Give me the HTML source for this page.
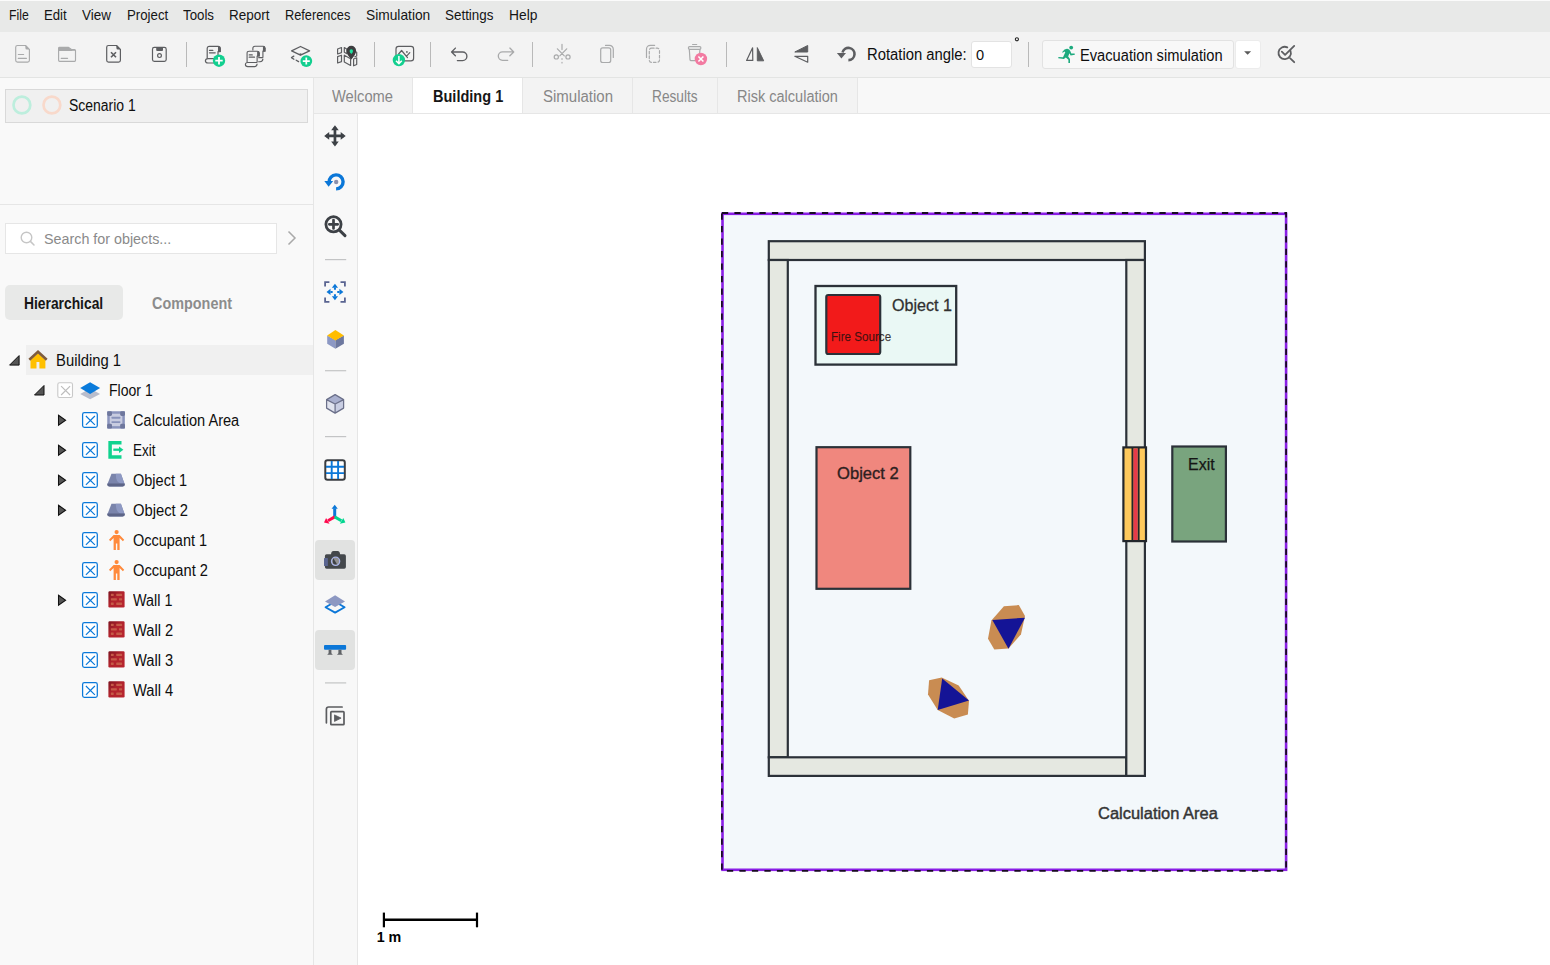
<!DOCTYPE html>
<html><head><meta charset="utf-8"><title>Evacuation</title>
<style>
*{margin:0;padding:0;box-sizing:border-box}
html,body{width:1550px;height:965px;overflow:hidden}
body{position:relative;font-family:"Liberation Sans",sans-serif;background:#ffffff;color:#1b1b1b}
.a{position:absolute}
.t{position:absolute;white-space:nowrap;line-height:1}
</style></head><body>

<div class="a" style="left:0px;top:0px;width:1550px;height:1px;background:#fbfbfb"></div>
<div class="a" style="left:0px;top:1px;width:1550px;height:31px;background:#e8e9e8"></div>
<div class="a" style="left:0px;top:32px;width:1550px;height:45px;background:#f3f3f3"></div>
<div class="a" style="left:0px;top:77px;width:1550px;height:1px;background:#e3e4e3"></div>
<div class="a" style="left:0px;top:78px;width:313px;height:887px;background:#f9f9f9"></div>
<div class="a" style="left:313px;top:78px;width:1px;height:887px;background:#e6e6e6"></div>
<div class="a" style="left:314px;top:78px;width:1236px;height:35px;background:#f8f8f8"></div>
<div class="a" style="left:314px;top:113px;width:1236px;height:1px;background:#e6e6e6"></div>
<div class="a" style="left:314px;top:114px;width:43px;height:851px;background:#f8f8f8"></div>
<div class="a" style="left:357px;top:114px;width:1px;height:851px;background:#e6e6e6"></div>
<div class="t" style="left:8.70px;top:7.67px;font-size:14.8px;color:#151515;font-weight:400;transform:scaleX(0.8268);transform-origin:0 0;">File</div>
<div class="t" style="left:44.40px;top:7.67px;font-size:14.8px;color:#151515;font-weight:400;transform:scaleX(0.8892);transform-origin:0 0;">Edit</div>
<div class="t" style="left:82.00px;top:7.67px;font-size:14.8px;color:#151515;font-weight:400;transform:scaleX(0.9114);transform-origin:0 0;">View</div>
<div class="t" style="left:126.50px;top:7.67px;font-size:14.8px;color:#151515;font-weight:400;transform:scaleX(0.8951);transform-origin:0 0;">Project</div>
<div class="t" style="left:183.20px;top:7.67px;font-size:14.8px;color:#151515;font-weight:400;transform:scaleX(0.8970);transform-origin:0 0;">Tools</div>
<div class="t" style="left:229.20px;top:7.67px;font-size:14.8px;color:#151515;font-weight:400;transform:scaleX(0.9122);transform-origin:0 0;">Report</div>
<div class="t" style="left:285.20px;top:7.67px;font-size:14.8px;color:#151515;font-weight:400;transform:scaleX(0.8626);transform-origin:0 0;">References</div>
<div class="t" style="left:366.00px;top:7.67px;font-size:14.8px;color:#151515;font-weight:400;transform:scaleX(0.9303);transform-origin:0 0;">Simulation</div>
<div class="t" style="left:445.00px;top:7.67px;font-size:14.8px;color:#151515;font-weight:400;transform:scaleX(0.9065);transform-origin:0 0;">Settings</div>
<div class="t" style="left:509.00px;top:7.67px;font-size:14.8px;color:#151515;font-weight:400;transform:scaleX(0.9338);transform-origin:0 0;">Help</div>
<div class="a" style="left:314px;top:78px;width:98px;height:35px;background:#f3f3f3"></div>
<div class="a" style="left:412px;top:78px;width:1px;height:35px;background:#e6e6e6"></div>
<div class="a" style="left:413px;top:78px;width:109px;height:35px;background:#ffffff"></div>
<div class="a" style="left:522px;top:78px;width:1px;height:35px;background:#e6e6e6"></div>
<div class="a" style="left:523px;top:78px;width:109px;height:35px;background:#f3f3f3"></div>
<div class="a" style="left:632px;top:78px;width:1px;height:35px;background:#e6e6e6"></div>
<div class="a" style="left:633px;top:78px;width:84px;height:35px;background:#f3f3f3"></div>
<div class="a" style="left:717px;top:78px;width:1px;height:35px;background:#e6e6e6"></div>
<div class="a" style="left:718px;top:78px;width:139px;height:35px;background:#f3f3f3"></div>
<div class="a" style="left:857px;top:78px;width:1px;height:35px;background:#e6e6e6"></div>
<div class="t" style="left:331.90px;top:89.29px;font-size:15.6px;color:#878787;font-weight:400;transform:scaleX(0.9422);transform-origin:0 0;">Welcome</div>
<div class="t" style="left:432.70px;top:89.29px;font-size:15.6px;color:#161616;font-weight:700;transform:scaleX(0.9320);transform-origin:0 0;">Building 1</div>
<div class="t" style="left:543.10px;top:89.29px;font-size:15.6px;color:#878787;font-weight:400;transform:scaleX(0.9622);transform-origin:0 0;">Simulation</div>
<div class="t" style="left:652.30px;top:89.29px;font-size:15.6px;color:#878787;font-weight:400;transform:scaleX(0.8784);transform-origin:0 0;">Results</div>
<div class="t" style="left:737.20px;top:89.29px;font-size:15.6px;color:#878787;font-weight:400;transform:scaleX(0.9313);transform-origin:0 0;">Risk calculation</div>
<div class="a" style="left:5px;top:89px;width:303px;height:34px;background:#f0f0f0;border:1px solid #d9d9d9"></div>
<svg class="a" style="left:12px;top:95px" width="20" height="20" viewBox="0 0 20 20"><circle cx="9.9" cy="10" r="8.4" fill="none" stroke="#bdeedd" stroke-width="2.7"/></svg>
<svg class="a" style="left:42px;top:95px" width="20" height="20" viewBox="0 0 20 20"><circle cx="9.9" cy="10" r="8.4" fill="none" stroke="#f8d9cb" stroke-width="2.7"/></svg>
<div class="t" style="left:69.20px;top:98.19px;font-size:15.6px;color:#0e0e0e;font-weight:400;transform:scaleX(0.8958);transform-origin:0 0;">Scenario 1</div>
<div class="a" style="left:0px;top:204px;width:313px;height:1px;background:#e6e6e6"></div>
<div class="a" style="left:5px;top:223px;width:272px;height:31px;background:#ffffff;border:1px solid #e6e6e6"></div>
<svg class="a" style="left:19px;top:230px" width="18" height="18" viewBox="0 0 18 18"><circle cx="7.5" cy="7.5" r="5.3" fill="none" stroke="#c6c6c6" stroke-width="1.4"/><line x1="11.4" y1="11.4" x2="15" y2="15" stroke="#c6c6c6" stroke-width="1.5" stroke-linecap="round"/></svg>
<div class="t" style="left:44.40px;top:232.28px;font-size:14.2px;color:#8a8a8a;font-weight:400;transform:scaleX(1.0086);transform-origin:0 0;">Search for objects...</div>
<svg class="a" style="left:285px;top:229px" width="14" height="18" viewBox="0 0 14 18"><path d="M3.5 2.5 L10 9 L3.5 15.5" fill="none" stroke="#a9a9a9" stroke-width="1.5"/></svg>
<div class="a" style="left:5px;top:285px;width:118px;height:35px;background:#e8e9e8;border-radius:5px"></div>
<div class="t" style="left:24.40px;top:295.53px;font-size:15.8px;color:#161616;font-weight:700;transform:scaleX(0.8756);transform-origin:0 0;">Hierarchical</div>
<div class="t" style="left:152.10px;top:295.53px;font-size:15.8px;color:#8c8c8c;font-weight:700;transform:scaleX(0.9115);transform-origin:0 0;">Component</div>
<div class="a" style="left:26px;top:345px;width:287px;height:30px;background:#f0f0f0"></div>
<div class="t" style="left:55.60px;top:353.39px;font-size:15.6px;color:#0e0e0e;font-weight:400;transform:scaleX(0.9506);transform-origin:0 0;">Building 1</div>
<div class="t" style="left:108.60px;top:383.39px;font-size:15.6px;color:#0e0e0e;font-weight:400;transform:scaleX(0.9007);transform-origin:0 0;">Floor 1</div>
<div class="t" style="left:133.40px;top:413.39px;font-size:15.6px;color:#0e0e0e;font-weight:400;transform:scaleX(0.9354);transform-origin:0 0;">Calculation Area</div>
<div class="t" style="left:133.40px;top:443.39px;font-size:15.6px;color:#0e0e0e;font-weight:400;transform:scaleX(0.8624);transform-origin:0 0;">Exit</div>
<div class="t" style="left:133.40px;top:473.39px;font-size:15.6px;color:#0e0e0e;font-weight:400;transform:scaleX(0.9310);transform-origin:0 0;">Object 1</div>
<div class="t" style="left:133.40px;top:503.39px;font-size:15.6px;color:#0e0e0e;font-weight:400;transform:scaleX(0.9465);transform-origin:0 0;">Object 2</div>
<div class="t" style="left:133.40px;top:533.39px;font-size:15.6px;color:#0e0e0e;font-weight:400;transform:scaleX(0.9286);transform-origin:0 0;">Occupant 1</div>
<div class="t" style="left:133.40px;top:563.39px;font-size:15.6px;color:#0e0e0e;font-weight:400;transform:scaleX(0.9399);transform-origin:0 0;">Occupant 2</div>
<div class="t" style="left:133.30px;top:593.39px;font-size:15.6px;color:#0e0e0e;font-weight:400;transform:scaleX(0.9218);transform-origin:0 0;">Wall 1</div>
<div class="t" style="left:133.30px;top:623.39px;font-size:15.6px;color:#0e0e0e;font-weight:400;transform:scaleX(0.9405);transform-origin:0 0;">Wall 2</div>
<div class="t" style="left:133.30px;top:653.39px;font-size:15.6px;color:#0e0e0e;font-weight:400;transform:scaleX(0.9405);transform-origin:0 0;">Wall 3</div>
<div class="t" style="left:133.30px;top:683.39px;font-size:15.6px;color:#0e0e0e;font-weight:400;transform:scaleX(0.9405);transform-origin:0 0;">Wall 4</div>
<div class="t" style="left:867.00px;top:46.83px;font-size:15.8px;color:#0e0e0e;font-weight:400;transform:scaleX(0.9383);transform-origin:0 0;">Rotation angle:</div>
<div class="a" style="left:971px;top:41px;width:41px;height:27px;background:#ffffff;border:1px solid #e3e3e3;border-radius:3px"></div>
<div class="t" style="left:976.00px;top:48.14px;font-size:14.6px;color:#111111;font-weight:400;">0</div>
<svg class="a" style="left:1012px;top:35px" width="10" height="10" viewBox="0 0 10 10"><circle cx="4.9" cy="4.2" r="1.55" fill="none" stroke="#222" stroke-width="1.05"/></svg>
<div class="a" style="left:1042px;top:40px;width:192px;height:29px;background:#f8f8f8;border:1px solid #e2e2e2;border-radius:3px"></div>
<div class="a" style="left:1235px;top:40px;width:26px;height:29px;background:#ffffff;border:1px solid #ececec;border-radius:3px"></div>
<svg class="a" style="left:1242px;top:49px" width="12" height="8" viewBox="0 0 12 8"><path d="M2.1 2.3 H9.1 L5.6 5.8 Z" fill="#5a5a5a"/></svg>
<div class="t" style="left:1079.70px;top:48.29px;font-size:15.6px;color:#0e0e0e;font-weight:400;transform:scaleX(0.9401);transform-origin:0 0;">Evacuation simulation</div>
<div class="a" style="left:186px;top:42px;width:1px;height:25px;background:#b9b9b9"></div>
<div class="a" style="left:374px;top:42px;width:1px;height:25px;background:#b9b9b9"></div>
<div class="a" style="left:430px;top:42px;width:1px;height:25px;background:#b9b9b9"></div>
<div class="a" style="left:532px;top:42px;width:1px;height:25px;background:#b9b9b9"></div>
<div class="a" style="left:726px;top:42px;width:1px;height:25px;background:#b9b9b9"></div>
<div class="a" style="left:1028px;top:42px;width:1px;height:25px;background:#b9b9b9"></div>
<svg class="a" style="left:0;top:0" width="1550" height="965" viewBox="0 0 1550 965"><rect x="722.5" y="213.8" width="563.6" height="656.0" fill="#f3f8fb" stroke="#8a1fe6" stroke-width="2.6"/><rect x="721.9" y="213.0" width="564.2" height="657.9" fill="none" stroke="#180a22" stroke-width="1.8" stroke-dasharray="6.3 6.2"/><rect x="768.8" y="241.2" width="376.10" height="18.80" fill="#e5e8e1" stroke="#2b3138" stroke-width="2.2" /><rect x="768.8" y="260" width="19.00" height="497.30" fill="#e5e8e1" stroke="#2b3138" stroke-width="2.2" /><rect x="768.8" y="757.3" width="357.50" height="18.60" fill="#e5e8e1" stroke="#2b3138" stroke-width="2.2" /><rect x="1126.3" y="260" width="18.60" height="515.90" fill="#e5e8e1" stroke="#2b3138" stroke-width="2.2" /><rect x="815.5" y="286" width="140.70" height="78.60" fill="#eaf8f5" stroke="#2b3138" stroke-width="2.3" /><rect x="826.3" y="295" width="53.90" height="59.00" fill="#f21a1a" stroke="#2b3138" stroke-width="2.2" rx="2"/><rect x="816.5" y="447.2" width="93.80" height="141.60" fill="#f0877e" stroke="#2b3138" stroke-width="2.2" /><rect x="1172.3" y="446.5" width="53.60" height="95.00" fill="#79a47e" stroke="#2b3138" stroke-width="2.2" /><rect x="1123.4" y="447.4" width="22.60" height="93.70" fill="#fec95c" stroke="#22262b" stroke-width="2.2" /><rect x="1133.3" y="448.5" width="4.4" height="91.5" fill="#e8394a"/><line x1="1132.4" y1="448" x2="1132.4" y2="540.5" stroke="#22262b" stroke-width="1.8"/><line x1="1138.7" y1="448" x2="1138.7" y2="540.5" stroke="#22262b" stroke-width="1.8"/><polygon points="1003.9,606.3 1018.8,605.1 1025,616 1021,634.2 1008.5,648.5 994.3,649.6 988,638.8 991.4,620.5" fill="#c98c52"/><polygon points="992.3,620 1025,617.7 1008.5,648.7" fill="#141496"/><polygon points="929.1,680.3 941.7,677.4 958.7,685.4 969,700.8 967.9,714.4 954.2,718.4 937.7,709.9 928,694.5" fill="#c98c52"/><polygon points="942.2,678.5 969,700.5 937.7,709.9" fill="#141496"/><line x1="383.9" y1="919.7" x2="477" y2="919.7" stroke="#000" stroke-width="2.6"/><line x1="383.9" y1="912.6" x2="383.9" y2="927.3" stroke="#000" stroke-width="2.2"/><line x1="477" y1="912.6" x2="477" y2="927.3" stroke="#000" stroke-width="2.2"/></svg>
<div class="t" style="left:892.20px;top:297.01px;font-size:17.0px;color:#303030;font-weight:400;transform:scaleX(0.9475);transform-origin:0 0;-webkit-text-stroke:0.3px #303030">Object 1</div>
<div class="t" style="left:830.80px;top:330.03px;font-size:13.2px;color:rgba(25,15,15,0.80);font-weight:400;transform:scaleX(0.8821);transform-origin:0 0;-webkit-text-stroke:0.25px rgba(25,15,15,0.6)">Fire Source</div>
<div class="t" style="left:837.20px;top:465.01px;font-size:17.0px;color:#2e2020;font-weight:400;transform:scaleX(0.9759);transform-origin:0 0;-webkit-text-stroke:0.35px #2e2020">Object 2</div>
<div class="t" style="left:1188.00px;top:456.85px;font-size:16.6px;color:#151515;font-weight:400;transform:scaleX(0.9624);transform-origin:0 0;-webkit-text-stroke:0.25px #151515">Exit</div>
<div class="t" style="left:1098.30px;top:804.96px;font-size:17.3px;color:#353535;font-weight:400;transform:scaleX(0.9522);transform-origin:0 0;-webkit-text-stroke:0.45px #353535">Calculation Area</div>
<div class="t" style="left:376.70px;top:929.90px;font-size:14.3px;color:#000000;font-weight:700;">1 m</div>
<svg class="a" style="left:0;top:0" width="1550" height="80" viewBox="0 0 1550 80"><g fill="none" stroke="#a9aaab" stroke-width="1.15" stroke-linejoin="round"><path d="M15.7 47.3 Q15.7 45.5 17.5 45.5 H25.6 L29.4 49.3 V60.3 Q29.4 62.1 27.6 62.1 H17.5 Q15.7 62.1 15.7 60.3 Z"/><path d="M18.3 54.5 H23.6 M18.3 58.4 H26.4" stroke-linecap="round"/></g><path d="M25.4 45.6 V48 Q25.4 49.5 26.9 49.5 H29.4 Z" fill="#a9aaab"/><g fill="none" stroke="#a9aaab" stroke-width="1.15" stroke-linejoin="round"><path d="M58.6 48.2 Q58.6 47.4 59.6 47.4 H68.6 L71.8 49.6 H74.6 Q75.5 49.6 75.5 50.6 V60.3 Q75.5 61.3 74.6 61.3 H59.6 Q58.6 61.3 58.6 60.3 Z"/><path d="M61.2 58.3 H67.6" stroke-linecap="round"/></g><path d="M58.6 48.2 Q58.6 47.2 59.6 47.2 H68.6 L72.4 50.2 H75.5 V51 H58.6 Z" fill="#a9aaab"/><g fill="none" stroke="#5d5e61" stroke-width="1.2" stroke-linejoin="round"><path d="M106.7 47.3 Q106.7 45.5 108.5 45.5 H116.6 L120.4 49.3 V60.3 Q120.4 62.1 118.6 62.1 H108.5 Q106.7 62.1 106.7 60.3 Z"/><path d="M111 52.2 L116 57.3 M116 52.2 L111 57.3" stroke-width="1.6"/></g><path d="M116.4 45.6 V48 Q116.4 49.5 117.9 49.5 H120.4 Z" fill="#5d5e61"/><g fill="none" stroke="#5d5e61" stroke-width="1.2" stroke-linejoin="round"><path d="M154.3 47.4 H164.4 Q166.2 47.4 166.2 49.2 V59.6 Q166.2 61.4 164.4 61.4 H154.3 Q152.5 61.4 152.5 59.6 V49.2 Q152.5 47.4 154.3 47.4 Z"/><circle cx="159.5" cy="55.6" r="1.9"/></g><path d="M156.2 47.3 H163 V50 Q163 50.9 162.1 50.9 H157.1 Q156.2 50.9 156.2 50 Z" fill="#5d5e61"/><g transform="translate(205.4 46.4) scale(1.0)"><g fill="none" stroke="#5d5e61" stroke-width="1.2" stroke-linejoin="round"><path d="M1.8 12.2 V2.2 Q1.8 0 4 0 H12.8 Q14.8 0 14.8 2 V5.2 H12.6 V12.2"/><path d="M12.6 12.2 H2.6 Q0 12.2 0 14.4 Q0 16.6 2.6 16.6 H9.5 Q12.6 16.6 12.6 13.5"/><path d="M4.1 4 H7.4 M4.1 6.4 H9.8" stroke-linecap="round" stroke-width="1.3"/></g><path d="M12.6 0 H13 Q15.4 0 15.4 2.2 V5.6 H12.6 Z" fill="#5d5e61"/></g><circle cx="219" cy="60.7" r="6.2" fill="#12cf8f"/><path d="M219 57 V64.4 M215.3 60.7 H222.7" stroke="#fff" stroke-width="1.8"/><g transform="translate(251.2 46.3) scale(0.93)"><g fill="none" stroke="#5d5e61" stroke-width="1.2" stroke-linejoin="round"><path d="M1.8 12.2 V2.2 Q1.8 0 4 0 H12.8 Q14.8 0 14.8 2 V5.2 H12.6 V12.2"/><path d="M12.6 12.2 H2.6 Q0 12.2 0 14.4 Q0 16.6 2.6 16.6 H9.5 Q12.6 16.6 12.6 13.5"/></g><path d="M12.6 0 H13 Q15.4 0 15.4 2.2 V5.6 H12.6 Z" fill="#5d5e61"/></g><g transform="translate(245.4 51.2) scale(0.93)"><path d="M-0.6 13 V1.5 Q-0.6 -0.8 2.4 -0.8 H16.2 V6.2 H13.8 V17.6 H-0.6 Z" fill="#f3f3f3"/><g fill="none" stroke="#5d5e61" stroke-width="1.2" stroke-linejoin="round"><path d="M1.8 12.2 V2.2 Q1.8 0 4 0 H12.8 Q14.8 0 14.8 2 V5.2 H12.6 V12.2"/><path d="M12.6 12.2 H2.6 Q0 12.2 0 14.4 Q0 16.6 2.6 16.6 H9.5 Q12.6 16.6 12.6 13.5"/><path d="M4.1 4 H7.4 M4.1 6.4 H9.8" stroke-linecap="round" stroke-width="1.3"/></g><path d="M12.6 0 H13 Q15.4 0 15.4 2.2 V5.6 H12.6 Z" fill="#5d5e61"/></g><g fill="none" stroke="#5d5e61" stroke-width="1.3" stroke-linejoin="round"><path d="M291.6 50.8 L300.5 46.5 L309.6 50.8 L300.5 55.1 Z"/><path d="M293.8 56.1 L291.5 57.6 L293.9 59.2 M296.2 60.2 L298.6 61.6" stroke-linecap="round"/></g><path d="M298.5 54.3 L300.5 53.2 L302.5 54.3 L300.5 55.4 Z" fill="#5d5e61"/><circle cx="306.3" cy="61.1" r="5.9" fill="#12cf8f"/><path d="M306.3 57.6 V64.6 M302.8 61.1 H309.8" stroke="#fff" stroke-width="1.7"/><g fill="none" stroke="#5d5e61" stroke-width="1.2" stroke-linejoin="round"><path d="M337.6 49 L341.5 47.5 V52.6 L337.6 54 Z"/><path d="M337.6 56.6 L341.5 55.2 V61.6 L337.6 63 Z"/><path d="M344.3 47.6 L347 49.3 V53.8 L344.3 52.3 Z"/><path d="M344.3 55.2 L350.6 58.8 V65.5 L344.3 61.9 Z"/><path d="M353.6 59 L356.7 57.8 V64.5 L353.6 65.8 Z"/><path d="M355 51.4 L356.7 52.2 V56 L354.4 57"/></g><path d="M351.3 59.4 Q346.3 54.2 346.5 50.6 A4.8 4.8 0 0 1 356.1 50.6 Q356.3 54.2 351.3 59.4 Z" fill="#3d3d3f"/><path d="M351.3 54.1 Q349.5 52.2 349.6 50.9 A1.7 1.7 0 0 1 353 50.9 Q353.1 52.2 351.3 54.1 Z" fill="#1fe19f"/><g fill="none" stroke="#5d5e61" stroke-width="1.2" stroke-linejoin="round" stroke-linecap="round"><rect x="396" y="46.3" width="17.6" height="14.5" rx="2.6"/><path d="M398.6 54 L401.6 50.5 L407.5 57.6 M406.6 56.1 L409.8 52.7"/></g><circle cx="406.9" cy="51.9" r="0.9" fill="#5d5e61"/><circle cx="398.9" cy="60.1" r="6.2" fill="#12cf8f"/><path d="M398.9 56 V63.4 M396 60.8 L398.9 63.6 L401.8 60.8" fill="none" stroke="#fff" stroke-width="1.5" stroke-linejoin="round"/><path d="M455.4 48.1 L451.6 52 L455.4 55.8 M451.8 52 H462.6 A4.3 4.3 0 0 1 462.6 60.6 H457.4" fill="none" stroke="#5d5e61" stroke-width="1.35" stroke-linecap="round" stroke-linejoin="round"/><path d="M509.9 48.1 L513.7 51.9 L509.9 55.7 M513.5 51.9 H502.5 A4.2 4.2 0 0 0 502.5 60.3 H507.7" fill="none" stroke="#a9aaab" stroke-width="1.35" stroke-linecap="round" stroke-linejoin="round"/><g fill="none" stroke="#a9aaab" stroke-width="1.2" stroke-linecap="round"><path d="M557.4 48.8 L564.3 55.8 M566.7 48.8 L559.8 55.8 M562 44.3 V49.6 M562 58.7 V59.3 M562 62.4 V63"/><circle cx="556.3" cy="56.9" r="2.1"/><circle cx="568" cy="56.9" r="2.1"/></g><g fill="none" stroke="#a9aaab" stroke-width="1.2" stroke-linecap="round"><rect x="600.7" y="47.9" width="10" height="14.6" rx="2"/><path d="M605.5 45.4 H609.5 A3.8 3.8 0 0 1 613.3 49.2 V57.4"/></g><g fill="none" stroke="#a9aaab" stroke-width="1.2" stroke-linecap="round"><rect x="649.3" y="48.2" width="10.2" height="14.1" rx="2.2" stroke-dasharray="2.6 2"/><path d="M646.5 57.4 V49.2 A3.8 3.8 0 0 1 650.3 45.4 H654.6"/></g><g fill="none" stroke="#a9aaab" stroke-width="1.2" stroke-linecap="round" stroke-linejoin="round"><path d="M692.6 44.5 H696.7"/><rect x="688.4" y="46.7" width="12.5" height="2.6" rx="1.2"/><path d="M689.3 49.3 L690 59.6 Q690.1 60.6 691.1 60.6 H695"/><path d="M700 49.3 L699.6 53.5"/></g><circle cx="700.9" cy="59" r="6.2" fill="#f27aa1"/><path d="M698.4 56.5 L703.4 61.5 M703.4 56.5 L698.4 61.5" stroke="#fff" stroke-width="1.6"/><path d="M752.6 47.8 L746.6 60.4 H752.8 Z" fill="none" stroke="#5d5e61" stroke-width="1.2" stroke-linejoin="round"/><path d="M757.3 47.6 L763.7 60.8 H757.3 Z" fill="#5d5e61" stroke="#5d5e61" stroke-width="1" stroke-linejoin="round"/><path d="M807.7 45.5 V52 H794.8 Z" fill="#5d5e61" stroke="#5d5e61" stroke-width="1" stroke-linejoin="round"/><path d="M794.8 56.3 H807.7 V62.2 Z" fill="none" stroke="#5d5e61" stroke-width="1.2" stroke-linejoin="round"/><path d="M842.5 52.5 A6.1 6.1 0 1 1 848.4 60.1" fill="none" stroke="#5d5e61" stroke-width="2.6" stroke-linecap="butt"/><path d="M836.9 53 H846 L841.4 58.6 Z" fill="#5d5e61"/><g fill="#1daa7e"><circle cx="1071.2" cy="47.6" r="1.9"/><path d="M1062.4 51.7 Q1064.5 48.6 1067.3 48.8 Q1069.6 49 1070.5 51.4 L1071.3 53.6 L1074.6 53.4 L1074.9 54.7 L1070.6 55.6 L1069.4 53.2 L1068.2 56.6 L1070 59 V63 H1068.4 V59.8 L1065.8 57.5 L1063.9 58.9 L1058.3 58.3 L1058.4 57 L1063 57.2 L1065.3 52.3 L1064.3 51.6 L1062.6 52.9 Z"/></g><g fill="none" stroke="#5d5e61" stroke-width="1.8" stroke-linecap="round" stroke-linejoin="round"><path d="M1287.3 47.4 A6.2 6.2 0 1 0 1290.5 50.9"/><path d="M1281.8 51.7 L1285.1 54.9 L1294.2 45.9 M1290 58.2 L1294.2 62.2"/></g></svg>
<svg class="a" style="left:0;top:340px" width="313" height="370" viewBox="0 340 313 370"><defs><linearGradient id="brk" x1="0" y1="0" x2="1" y2="1"><stop offset="0" stop-color="#7e1520"/><stop offset="0.45" stop-color="#b2232d"/><stop offset="1" stop-color="#b8262f"/></linearGradient></defs><path d="M9.6 365.1 H19.1 V355.6 Z" fill="#555" stroke="#111" stroke-width="1.0" stroke-linejoin="miter"/><path d="M30.5 360 L38 353.2 L45.4 360 V368.4 H39.4 V361.9 H36.5 V368.4 H30.5 Z" fill="#ffc000"/><path d="M29.3 359.8 L38 351.8 L46.7 359.8" fill="none" stroke="#7e5c3e" stroke-width="2.6" stroke-linejoin="miter"/><path d="M34.5 395.0 H44.0 V385.5 Z" fill="#555" stroke="#111" stroke-width="1.0" stroke-linejoin="miter"/><rect x="57.800000000000004" y="382.8" width="14.7" height="14.7" rx="1.8" fill="#fff" stroke="#c9c9c9" stroke-width="1.1"/><path d="M61.1 386.2 L70.10000000000001 395.0 M70.10000000000001 386.2 L61.1 395.0" stroke="#bdbdbd" stroke-width="1.15"/><path d="M80.2 394 L90.1 388.6 L100.1 394 L90.1 399.2 Z" fill="#b9bdcc"/><path d="M80.2 388 L90.1 382.3 L100.1 388 L90.1 393.9 Z" fill="#0a7bdb"/><path d="M58.5 415.3 L65.6 420.3 L58.5 425.3 Z" fill="#555" stroke="#111" stroke-width="1.05"/><rect x="82.6" y="412.6" width="14.7" height="14.7" rx="1.8" fill="#fff" stroke="#0b79d9" stroke-width="1.25"/><path d="M85.9 416 L94.9 424.8 M94.9 416 L85.9 424.8" stroke="#0b79d9" stroke-width="1.15"/><rect x="108.5" y="412.5" width="15.1" height="14.9" fill="#c8cce0" stroke="#8a94bd" stroke-width="2.5"/><path d="M112.3 417.7 H119.6 M112.3 422.1 H119.6" stroke="#8892ba" stroke-width="1.9" stroke-linecap="round"/><rect x="107.19999999999999" y="411.20000000000005" width="4.8" height="4.8" rx="1.4" fill="#6e779d"/><rect x="120.19999999999999" y="411.20000000000005" width="4.8" height="4.8" rx="1.4" fill="#6e779d"/><rect x="107.19999999999999" y="423.8" width="4.8" height="4.8" rx="1.4" fill="#6e779d"/><rect x="120.19999999999999" y="423.8" width="4.8" height="4.8" rx="1.4" fill="#6e779d"/><path d="M58.5 445.3 L65.6 450.3 L58.5 455.3 Z" fill="#555" stroke="#111" stroke-width="1.05"/><rect x="82.6" y="442.6" width="14.7" height="14.7" rx="1.8" fill="#fff" stroke="#0b79d9" stroke-width="1.25"/><path d="M85.9 446 L94.9 454.8 M94.9 446 L85.9 454.8" stroke="#0b79d9" stroke-width="1.15"/><path d="M121.5 442.7 H110.1 V457.1 H121.5" fill="none" stroke="#10d38f" stroke-width="3.5"/><path d="M113.3 449.7 H119.8" stroke="#10d38f" stroke-width="2.3"/><path d="M119 446.5 L123.4 449.7 L119 453 Z" fill="#10d38f"/><path d="M58.5 475.3 L65.6 480.3 L58.5 485.3 Z" fill="#555" stroke="#111" stroke-width="1.05"/><rect x="82.6" y="472.6" width="14.7" height="14.7" rx="1.8" fill="#fff" stroke="#0b79d9" stroke-width="1.25"/><path d="M85.9 476 L94.9 484.8 M94.9 476 L85.9 484.8" stroke="#0b79d9" stroke-width="1.15"/><path d="M111.5 473.7 H120.9 L124.6 484.1 Q124.9 486.4 122.6 486.4 H109.5 Q107.2 486.4 107.5 484.1 Z" fill="#7a84ab"/><path d="M115.8 473.7 H120.9 L124.4 483.5 H121 Q115.6 482.6 115.8 473.7 Z" fill="#8e99c3"/><path d="M107.4 483.6 H124.7 L124.8 484.4 Q124.9 486.4 122.6 486.4 H109.5 Q107.2 486.4 107.3 484.4 Z" fill="#5d6587"/><path d="M58.5 505.3 L65.6 510.3 L58.5 515.3 Z" fill="#555" stroke="#111" stroke-width="1.05"/><rect x="82.6" y="502.6" width="14.7" height="14.7" rx="1.8" fill="#fff" stroke="#0b79d9" stroke-width="1.25"/><path d="M85.9 506 L94.9 514.8 M94.9 506 L85.9 514.8" stroke="#0b79d9" stroke-width="1.15"/><path d="M111.5 503.7 H120.9 L124.6 514.1 Q124.9 516.4 122.6 516.4 H109.5 Q107.2 516.4 107.5 514.1 Z" fill="#7a84ab"/><path d="M115.8 503.7 H120.9 L124.4 513.5 H121 Q115.6 512.6 115.8 503.7 Z" fill="#8e99c3"/><path d="M107.4 513.6 H124.7 L124.8 514.4 Q124.9 516.4 122.6 516.4 H109.5 Q107.2 516.4 107.3 514.4 Z" fill="#5d6587"/><rect x="82.6" y="532.6" width="14.7" height="14.7" rx="1.8" fill="#fff" stroke="#0b79d9" stroke-width="1.25"/><path d="M85.9 536 L94.9 544.8 M94.9 536 L85.9 544.8" stroke="#0b79d9" stroke-width="1.15"/><g fill="#ff8a3c"><circle cx="116.6" cy="532.1" r="2.1"/><path d="M113.6 535 H119.6 L124.2 539.8 L122.9 541.3 L119.6 538.1 V549.9 H117.3 V543.4 H115.9 V549.9 H113.6 V538.1 L110.3 541.3 L109 539.8 Z"/></g><rect x="82.6" y="562.6" width="14.7" height="14.7" rx="1.8" fill="#fff" stroke="#0b79d9" stroke-width="1.25"/><path d="M85.9 566 L94.9 574.8 M94.9 566 L85.9 574.8" stroke="#0b79d9" stroke-width="1.15"/><g fill="#ff8a3c"><circle cx="116.6" cy="562.1" r="2.1"/><path d="M113.6 565 H119.6 L124.2 569.8 L122.9 571.3 L119.6 568.1 V579.9 H117.3 V573.4 H115.9 V579.9 H113.6 V568.1 L110.3 571.3 L109 569.8 Z"/></g><path d="M58.5 595.3 L65.6 600.3 L58.5 605.3 Z" fill="#555" stroke="#111" stroke-width="1.05"/><rect x="82.6" y="592.6" width="14.7" height="14.7" rx="1.8" fill="#fff" stroke="#0b79d9" stroke-width="1.25"/><path d="M85.9 596 L94.9 604.8 M94.9 596 L85.9 604.8" stroke="#0b79d9" stroke-width="1.15"/><rect x="108.4" y="591.2" width="16.2" height="16.2" rx="1.2" fill="url(#brk)"/><rect x="110.9" y="593.7" width="2.8" height="2.3" rx="0.4" fill="#c65c49"/><rect x="116.2" y="593.7" width="5.9" height="2.3" rx="0.4" fill="#c65c49"/><rect x="110.9" y="598.2" width="5.9" height="2.3" rx="0.4" fill="#c65c49"/><rect x="119.0" y="598.2" width="3.1" height="2.3" rx="0.4" fill="#c65c49"/><rect x="110.9" y="602.6" width="2.8" height="2.3" rx="0.4" fill="#c65c49"/><rect x="116.2" y="602.6" width="5.9" height="2.3" rx="0.4" fill="#c65c49"/><rect x="82.6" y="622.6" width="14.7" height="14.7" rx="1.8" fill="#fff" stroke="#0b79d9" stroke-width="1.25"/><path d="M85.9 626 L94.9 634.8 M94.9 626 L85.9 634.8" stroke="#0b79d9" stroke-width="1.15"/><rect x="108.4" y="621.2" width="16.2" height="16.2" rx="1.2" fill="url(#brk)"/><rect x="110.9" y="623.7" width="2.8" height="2.3" rx="0.4" fill="#c65c49"/><rect x="116.2" y="623.7" width="5.9" height="2.3" rx="0.4" fill="#c65c49"/><rect x="110.9" y="628.2" width="5.9" height="2.3" rx="0.4" fill="#c65c49"/><rect x="119.0" y="628.2" width="3.1" height="2.3" rx="0.4" fill="#c65c49"/><rect x="110.9" y="632.6" width="2.8" height="2.3" rx="0.4" fill="#c65c49"/><rect x="116.2" y="632.6" width="5.9" height="2.3" rx="0.4" fill="#c65c49"/><rect x="82.6" y="652.6" width="14.7" height="14.7" rx="1.8" fill="#fff" stroke="#0b79d9" stroke-width="1.25"/><path d="M85.9 656 L94.9 664.8 M94.9 656 L85.9 664.8" stroke="#0b79d9" stroke-width="1.15"/><rect x="108.4" y="651.2" width="16.2" height="16.2" rx="1.2" fill="url(#brk)"/><rect x="110.9" y="653.7" width="2.8" height="2.3" rx="0.4" fill="#c65c49"/><rect x="116.2" y="653.7" width="5.9" height="2.3" rx="0.4" fill="#c65c49"/><rect x="110.9" y="658.2" width="5.9" height="2.3" rx="0.4" fill="#c65c49"/><rect x="119.0" y="658.2" width="3.1" height="2.3" rx="0.4" fill="#c65c49"/><rect x="110.9" y="662.6" width="2.8" height="2.3" rx="0.4" fill="#c65c49"/><rect x="116.2" y="662.6" width="5.9" height="2.3" rx="0.4" fill="#c65c49"/><rect x="82.6" y="682.6" width="14.7" height="14.7" rx="1.8" fill="#fff" stroke="#0b79d9" stroke-width="1.25"/><path d="M85.9 686 L94.9 694.8 M94.9 686 L85.9 694.8" stroke="#0b79d9" stroke-width="1.15"/><rect x="108.4" y="681.2" width="16.2" height="16.2" rx="1.2" fill="url(#brk)"/><rect x="110.9" y="683.7" width="2.8" height="2.3" rx="0.4" fill="#c65c49"/><rect x="116.2" y="683.7" width="5.9" height="2.3" rx="0.4" fill="#c65c49"/><rect x="110.9" y="688.2" width="5.9" height="2.3" rx="0.4" fill="#c65c49"/><rect x="119.0" y="688.2" width="3.1" height="2.3" rx="0.4" fill="#c65c49"/><rect x="110.9" y="692.6" width="2.8" height="2.3" rx="0.4" fill="#c65c49"/><rect x="116.2" y="692.6" width="5.9" height="2.3" rx="0.4" fill="#c65c49"/></svg>
<div class="a" style="left:315px;top:540px;width:40px;height:40px;background:#e1e2e1;border-radius:4px"></div>
<div class="a" style="left:315px;top:630px;width:40px;height:40px;background:#e1e2e1;border-radius:4px"></div>
<svg class="a" style="left:313px;top:114px" width="45" height="630" viewBox="313 114 45 630"><line x1="325" y1="259.6" x2="346.2" y2="259.6" stroke="#c3c4c5" stroke-width="1.2"/><line x1="325" y1="370.7" x2="346.2" y2="370.7" stroke="#c3c4c5" stroke-width="1.2"/><line x1="325" y1="436.6" x2="346.2" y2="436.6" stroke="#c3c4c5" stroke-width="1.2"/><line x1="325" y1="682.9" x2="346.2" y2="682.9" stroke="#c3c4c5" stroke-width="1.2"/><path d="M334.95 127.4 V144.4 M326.45 135.9 H343.45" stroke="#3d4146" stroke-width="2.7"/><path d="M334.95 125.3 L338.75 130.3 H331.15 Z M334.95 146.5 L338.75 141.5 H331.15 Z M324.2 135.9 L329.2 132.1 V139.70000000000002 Z M345.7 135.9 L340.7 132.1 V139.70000000000002 Z" fill="#3d4146"/><path d="M329.1 182.2 A7 7 0 1 1 336.1 188.9" fill="none" stroke="#0b77d8" stroke-width="3.4"/><path d="M324.3 181 H333.2 L328.6 186.8 Z" fill="#0b77d8"/><circle cx="336.2" cy="182" r="2.2" fill="#8a90ad"/><circle cx="333.5" cy="224.3" r="7.6" fill="none" stroke="#3d4146" stroke-width="2.8"/><path d="M333.5 220.1 V228.5 M329.3 224.3 H337.7" stroke="#3d4146" stroke-width="2.7" stroke-linecap="round"/><path d="M339.4 230.2 L345 235.6" stroke="#3d4146" stroke-width="3" stroke-linecap="round"/><path d="M325.1 286.4 V282.1 H329.4 M340.5 282.1 H344.9 V286.4 M325.1 297.4 V301.8 H329.4 M340.5 301.8 H344.9 V297.4" fill="none" stroke="#5a6491" stroke-width="1.8"/><path d="M334.95 287.45 V289.65 M334.95 296.45 V294.25 M330.45 291.95 H332.65 M339.45 291.95 H337.25" stroke="#0b77d8" stroke-width="2"/><path d="M334.95 283.7 L338.05 287.7 H331.84999999999997 Z M334.95 300.3 L338.05 296.3 H331.84999999999997 Z M326.5 291.95 L330.5 288.84999999999997 V295.05 Z M343.4 291.95 L339.4 288.84999999999997 V295.05 Z" fill="#0b77d8"/><path d="M327.2 335.4 L335.4 340.1 V348.8 L327.2 343.8 Z" fill="#8c98c4"/><path d="M343.9 335.4 L335.4 340.1 V348.8 L343.9 343.8 Z" fill="#6d789f"/><path d="M335.4 329.9 L343.9 335.4 L335.4 340.4 L327.2 335.4 Z" fill="#ffbd00"/><path d="M326.6 399.6 L335.1 404 V413.1 L326.6 408.1 Z" fill="#e0e3ee"/><path d="M343.6 399.6 L335.1 404 V413.1 L343.6 408.1 Z" fill="#c9cee3"/><path d="M335.1 394.6 L343.6 399.6 L335.1 404 L326.6 399.6 Z" fill="#a9b0cf"/><path d="M335.1 394.6 L343.6 399.6 V408.1 L335.1 413.1 L326.6 408.1 V399.6 Z M326.6 399.6 L335.1 404 L343.6 399.6 M335.1 404 V413.1" fill="none" stroke="#6b708a" stroke-width="1.25" stroke-linejoin="round"/><rect x="325.3" y="460.2" width="19.5" height="19.5" rx="2.2" fill="#fff" stroke="#3a3d41" stroke-width="2"/><path d="M331.7 461 V479 M338.1 461 V479 M326 466.7 H344 M326 473.1 H344" stroke="#0b77d8" stroke-width="1.9"/><path d="M334.7 516.9 V508.3" stroke="#0b77d8" stroke-width="3"/><path d="M334.7 504.8 L337.8 508.7 H331.59999999999997 Z" fill="#0b77d8"/><path d="M334.7 516.9 L328 520.7" stroke="#ff0a4e" stroke-width="3"/><path d="M324 522.6 L326.1 517.9 L329.5 523.8 Z" fill="#ff0a4e"/><path d="M334.7 516.9 L341.4 520.7" stroke="#00d68f" stroke-width="3"/><path d="M345.4 522.6 L343.3 517.9 L339.9 523.8 Z" fill="#00d68f"/><path d="M331 554.2 Q331.4 551.1 333.5 551.1 H337.6 Q339.7 551.1 340.1 554.2 H344.2 Q345.9 554.2 345.9 556 V567 Q345.9 568.8 344.2 568.8 H326.6 Q324.9 568.8 324.9 567 V556 Q324.9 554.2 326.6 554.2 Z" fill="#43474b"/><rect x="324" y="558" width="3.9" height="8" rx="0.6" fill="#5a6590"/><circle cx="335.6" cy="561.3" r="4.1" fill="#909090" stroke="#a9b4e8" stroke-width="1.3"/><path d="M333.4 558.3 L337 564.2 Q334.8 565 333.2 563.6 Q331.9 561.6 333.4 558.3 Z" fill="#3d4044"/><path d="M325.5 607.2 L335.1 601.8 L344.6 607.2 L335.1 612.6 Z" fill="none" stroke="#0b77d8" stroke-width="1.8" stroke-linejoin="round"/><path d="M335.1 595.2 L345 601.4 L335.1 607 L325 601.4 Z" fill="#8d98c2"/><rect x="324" y="645" width="22.1" height="4.8" rx="1" fill="#0b77d8"/><path d="M328.6 649.8 H331.4 V653.2 L332.8 654.8 H327.2 L328.6 653.2 Z M338.4 649.8 H341.5 V653.2 L342.9 654.8 H337 L338.4 653.2 Z" fill="#5f6266"/><path d="M326.4 722.8 V709.3 Q326.4 707 328.7 707 H342.1" fill="none" stroke="#5b5c5f" stroke-width="1.7" stroke-linecap="round"/><rect x="330.8" y="711.7" width="13.2" height="13" rx="0.8" fill="none" stroke="#5b5c5f" stroke-width="1.7"/><path d="M334.5 714.9 L341.1 718.1 L334.5 721.4 Z" fill="#5b5c5f" stroke="#5b5c5f" stroke-width="0.8" stroke-linejoin="round"/></svg>
</body></html>
